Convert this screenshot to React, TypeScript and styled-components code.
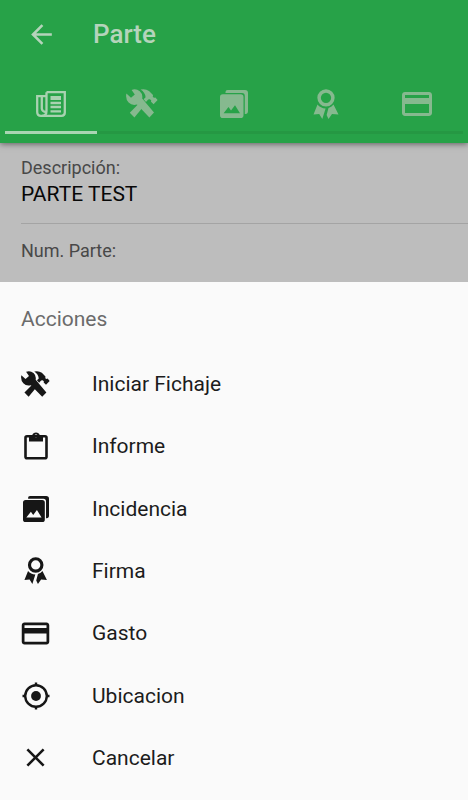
import React from "react";
import styled, { createGlobalStyle } from "styled-components";
import { MdOutlineCreditCard, MdArrowBack, MdClose } from "react-icons/md";

const GlobalStyle = createGlobalStyle`
  * { box-sizing: border-box; }
  body { margin: 0; background: #fafafa; font-family: Roboto, sans-serif; }
  button { font: inherit; color: inherit; background: none; border: 0; padding: 0; margin: 0; cursor: pointer; }
  svg { display: block; flex: none; }
`;

const Page = styled.div`
  display: flex;
  flex-direction: column;
  min-height: 100vh;
`;

const Header = styled.header`
  position: relative;
  background: #27a248;
  color: #b5d4bb;
  box-shadow: 0 1px 6px rgba(0, 0, 0, 0.5);
  padding-bottom: 9px;
`;

const Toolbar = styled.div`
  display: flex;
  align-items: center;
  height: 68px;
  padding-left: 26px;
  gap: 36px;
`;

const Title = styled.h1`
  margin: 0;
  font-size: 26px;
  line-height: 32px;
  font-weight: 500;
`;

const Tabs = styled.nav`
  display: flex;
  padding: 0 5px;
`;

const Tab = styled.button<{ $active?: boolean }>`
  flex: 1;
  height: 66px;
  display: flex;
  align-items: center;
  justify-content: center;
  padding-top: 8px;
  color: ${(p) => (p.$active ? "#a9d2b1" : "#86b98f")};
  border-bottom: 3px solid ${(p) => (p.$active ? "#a9d5b3" : "#259843")};
`;

const Details = styled.main`
  background: #bdbdbd;
  padding-left: 21px;
`;

const Field = styled.div`
  padding: 12px 0 16px;
  & + & {
    border-top: 1px solid #a4a4a4;
    padding: 14px 0 18px;
  }
`;

const Label = styled.div`
  font-size: 18px;
  line-height: 26px;
  color: #484848;
`;

const Value = styled.div`
  font-size: 21px;
  line-height: 26px;
  color: #080808;
`;

const Sheet = styled.section`
  flex: 1;
  display: flex;
  flex-direction: column;
  padding-bottom: 11px;
  background: #fafafa;
`;

const SheetTitle = styled.h2`
  margin: 0;
  padding: 22px 21px 19px;
  font-size: 21px;
  line-height: 30px;
  font-weight: 400;
  color: #6b6b6b;
`;

const Action = styled.button`
  flex: 1 0 48px;
  display: flex;
  align-items: center;
  gap: 41px;
  padding: 0 20px;
  text-align: left;
  font-size: 21px;
  line-height: 28px;
  color: #1c1c1c;
`;

const IconSlot = styled.span`
  width: 31px;
  display: flex;
  justify-content: center;
  color: #161616;
`;

function PaperIcon() {
  return (
    <svg width="30" height="26" viewBox="0 0 30 26" fill="none" stroke="currentColor" strokeWidth="2.3" aria-hidden="true">
      <path d="M10.5 1.2H28.8V21.5Q28.8 24.8 25.5 24.8H5Q1.2 24.8 1.2 21V5.2H10.5" />
      <path d="M10.5 1.2V20Q10.5 24.8 6 24.8M5.8 5.2V17.5Q6 20.5 9.5 21" />
      <path d="M14.5 7H25" strokeWidth="4" />
      <path d="M14.5 12H25M14.5 16H25M14.5 20.3H25" />
    </svg>
  );
}

function ToolsIcon({ size }: { size: number }) {
  return (
    <svg width={size} height={(size * 29) / 32} viewBox="0 0 32 29" fill="currentColor" aria-hidden="true">
      <path d="M.4 4.6L5 8.8L8.8 5.6L5.6 .9Q10-.8 13.8 2.2Q17 5 16.2 9.6L28 23.6L23.4 28.4L11 15.6Q6 17 2.6 13.6Q-.8 9.8 .4 4.6Z" />
      <path d="M14.6 .6Q19.5-.6 23 2L27 6L26.8 8L28.2 8.8L29.4 8.4L31.6 11L27.6 15.2L25 12.8L25.2 11.2L23.8 10.2L22.2 10.6L20 13L17.6 10.2L19.6 8.2Q19.2 3.6 14.6 .6Z" />
      <path d="M12.6 14.8L16.4 18.8L8.4 28.4L3.8 23.8Z" />
    </svg>
  );
}

function RibbonIcon({ size }: { size: number }) {
  return (
    <svg width={(size * 26) / 30} height={size} viewBox="0 0 26 30" fill="currentColor" aria-hidden="true">
      <circle cx="13" cy="8.8" r="6.9" fill="none" stroke="currentColor" strokeWidth="3.5" />
      <path d="M4.5 15.5Q7.5 19.2 12.6 19.5L9.3 30L6.2 25L.5 25.5Z" />
      <path d="M20.5 15.5Q19 17.5 15.5 19L13.6 26L15.5 30L19 25L25.5 25.5Z" />
    </svg>
  );
}

function ImagesIcon({ size }: { size: number }) {
  return (
    <svg width={size} height={size} viewBox="0 0 28 28" fill="currentColor" aria-hidden="true">
      <path d="M5.5 3V2Q5.5 0 7.5 0H25Q28 0 28 3V21Q28 24 25.5 24H24.8V6Q24.8 3 22 3Z" />
      <path
        fillRule="evenodd"
        d="M2.8 4.2H20.7Q23.5 4.2 23.5 7V25.2Q23.5 28 20.7 28H2.8Q0 28 0 25.2V7Q0 4.2 2.8 4.2ZM3.6 23.2H20L15 15.2L11 20.4L8.5 17Z"
      />
    </svg>
  );
}

function ClipboardIcon() {
  return (
    <svg width="24" height="28" viewBox="0 0 24 28" aria-hidden="true">
      <rect x="1.5" y="4.3" width="21" height="22" rx="1.5" fill="none" stroke="currentColor" strokeWidth="2.6" />
      <path fill="currentColor" fillRule="evenodd" d="M5 3.2H8.2A4 4 0 0 1 15.8 3.2H19V9.5H5ZM12 2.2A1.6 1.6 0 1 0 12 5.4A1.6 1.6 0 1 0 12 2.2Z" />
    </svg>
  );
}

function LocateIcon() {
  return (
    <svg width="28" height="28" viewBox="0 0 28 28" fill="none" stroke="currentColor" strokeWidth="2.4" aria-hidden="true">
      <circle cx="14" cy="14" r="10.8" />
      <circle cx="14" cy="14" r="4.9" fill="currentColor" stroke="none" />
      <path d="M14 .5V4M14 24V27.5M.5 14H4M24 14H27.5" />
    </svg>
  );
}

const tabs = [
  { name: "Parte", icon: <PaperIcon /> },
  { name: "Fichaje", icon: <ToolsIcon size={32} /> },
  { name: "Incidencias", icon: <ImagesIcon size={28} /> },
  { name: "Firma", icon: <RibbonIcon size={30} /> },
  { name: "Gastos", icon: <MdOutlineCreditCard size={36} /> },
];

const actions = [
  { name: "Iniciar Fichaje", icon: <ToolsIcon size={29} /> },
  { name: "Informe", icon: <ClipboardIcon /> },
  { name: "Incidencia", icon: <ImagesIcon size={26} /> },
  { name: "Firma", icon: <RibbonIcon size={27} /> },
  { name: "Gasto", icon: <MdOutlineCreditCard size={33} /> },
  { name: "Ubicacion", icon: <LocateIcon /> },
  { name: "Cancelar", icon: <MdClose size={31} /> },
];

export default function App() {
  return (
    <Page>
      <GlobalStyle />
      <Header>
        <Toolbar>
          <button aria-label="Volver"><MdArrowBack size={31} /></button>
          <Title>Parte</Title>
        </Toolbar>
        <Tabs>
          {tabs.map((tab, i) => (
            <Tab key={tab.name} $active={i === 0} aria-label={tab.name}>{tab.icon}</Tab>
          ))}
        </Tabs>
      </Header>
      <Details>
        <Field>
          <Label>Descripción:</Label>
          <Value>PARTE TEST</Value>
        </Field>
        <Field>
          <Label>Num. Parte:</Label>
        </Field>
      </Details>
      <Sheet>
        <SheetTitle>Acciones</SheetTitle>
        {actions.map((action) => (
          <Action key={action.name}>
            <IconSlot>{action.icon}</IconSlot>
            {action.name}
          </Action>
        ))}
      </Sheet>
    </Page>
  );
}
